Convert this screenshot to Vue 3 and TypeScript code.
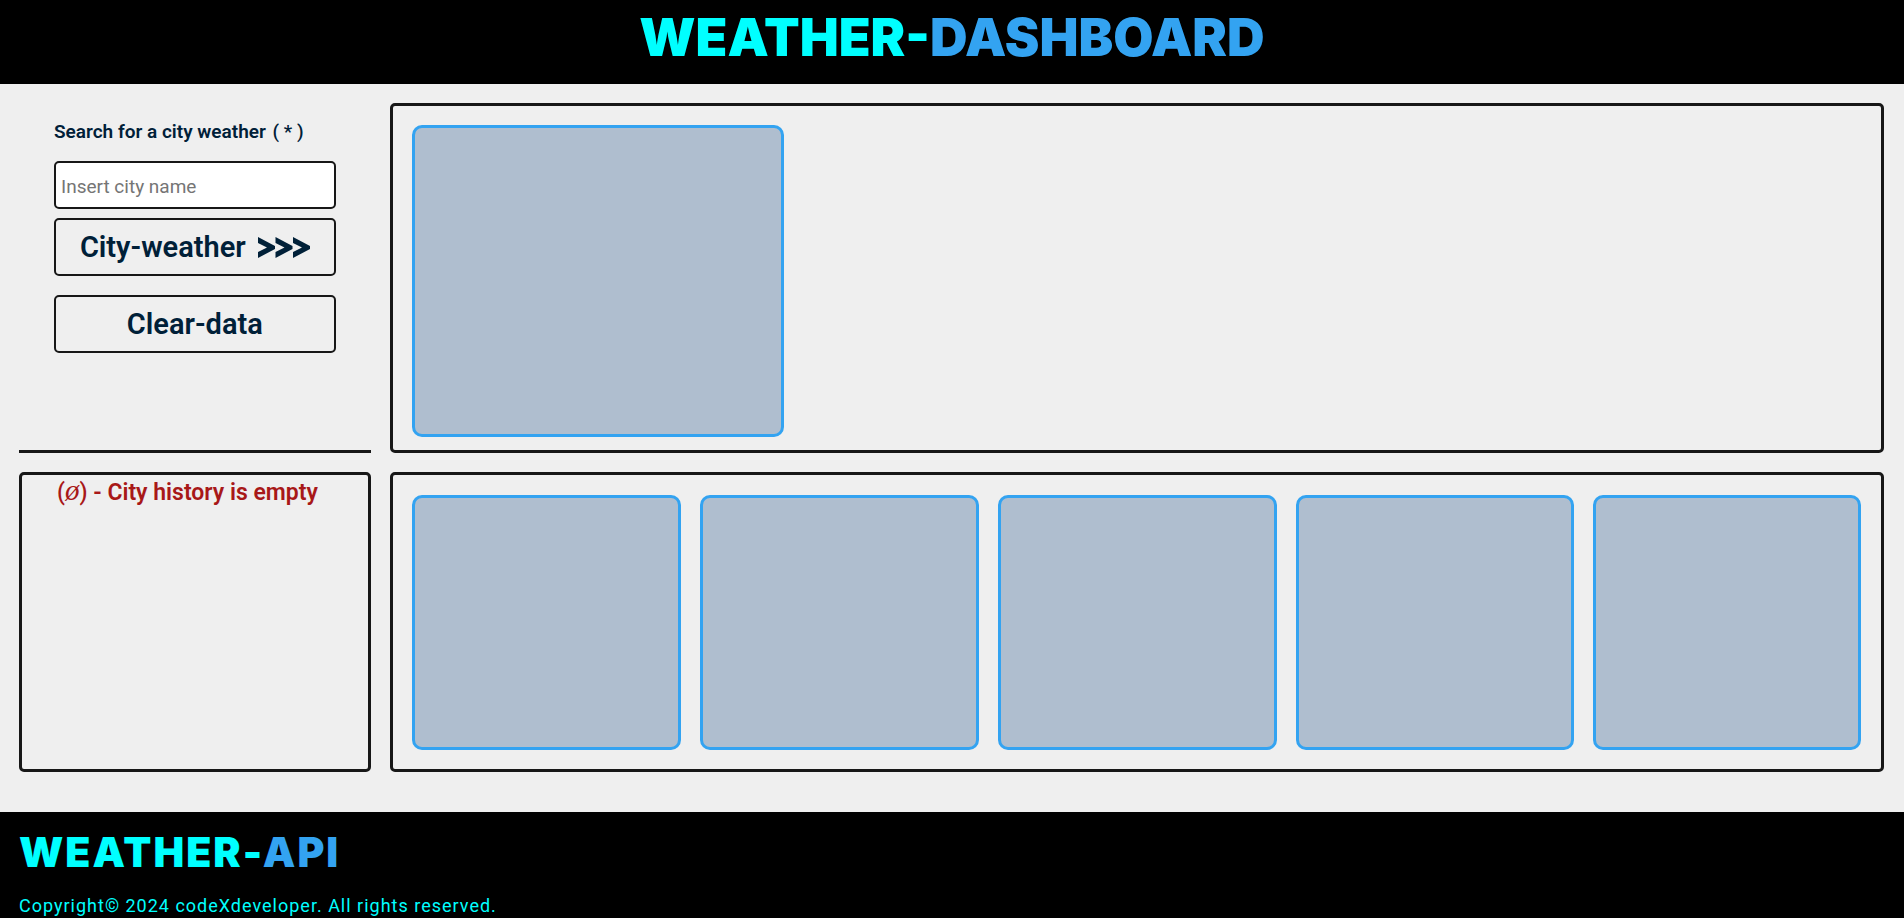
<script setup lang="ts">
import { ref } from 'vue'

const city = ref('')
const history = ref<string[]>([])
const forecastDays = [1, 2, 3, 4, 5]

function search(): void {
  const name = city.value.trim()
  if (name && !history.value.includes(name)) history.value.push(name)
  city.value = ''
}

function clearData(): void {
  history.value = []
  city.value = ''
}
</script>

<template>
  <div class="page">
    <header class="header">
      <h1 class="title">WEATHER-<span class="accent">DASHBOARD</span></h1>
    </header>

    <main class="board">
      <form class="search" @submit.prevent="search">
        <label class="label" for="city">Search for a city weather <span class="required">( * )</span></label>
        <input id="city" v-model="city" class="field" type="text" placeholder="Insert city name" />
        <button class="button" type="submit">
          City-weather
          <svg class="arrows" viewBox="0 0 52 21" width="52" height="21" aria-hidden="true">
            <path d="M0 0 17 9V12L0 21V15L9 10.500 0 6Z" />
            <path d="M17.500 0 34.500 9V12L17.500 21V15L26.500 10.500 17.500 6Z" />
            <path d="M35 0 52 9V12L35 21V15L44 10.500 35 6Z" />
          </svg>
        </button>
        <button class="button clear" type="button" @click="clearData">Clear-data</button>
      </form>

      <section class="panel" aria-label="Current weather">
        <article class="card current"></article>
      </section>

      <section class="panel history" aria-label="City history">
        <p v-if="!history.length" class="empty"><span class="sign">(<i class="null">ø</i>)</span> - City history is empty</p>
        <p v-for="name in history" :key="name" class="empty">{{ name }}</p>
      </section>

      <section class="panel forecast" aria-label="Five day forecast">
        <article v-for="day in forecastDays" :key="day" class="card day"></article>
      </section>
    </main>

    <footer class="footer">
      <h2 class="brand">WEATHER-<span class="accent">API</span></h2>
      <p class="copyright">Copyright© 2024 codeXdeveloper. All rights reserved.</p>
    </footer>
  </div>
</template>

<style>
body {
  margin: 0;
  background: #efefef;
}
</style>

<style scoped>
.page {
  font-family: Roboto, "Noto Sans", sans-serif;
  color: #002038;
  background: #efefef;
}

.page * {
  box-sizing: border-box;
}

.header,
.footer {
  background: #000;
  color: #00ffff;
}

.header {
  height: 84px;
  padding-top: 8px;
  text-align: center;
}

.title,
.brand {
  margin: 0;
  font-family: Inter, Roboto, sans-serif;
  font-weight: 900;
}

.title {
  font-size: 52px;
  line-height: 60px;
}

.accent {
  color: #33a3f1;
}

.board {
  display: grid;
  grid-template-columns: minmax(0, 4fr) minmax(0, 17fr);
  grid-template-rows: 350px 300px;
  gap: 19px;
  padding: 19px 20px 40px 19px;
}

.search {
  display: flex;
  flex-direction: column;
  padding: 19px 35px 0;
  border-bottom: 3px solid #171717;
}

.label {
  margin-bottom: 19px;
  font-size: 19px;
  line-height: 20px;
  font-weight: 600;
}

.required {
  margin-left: 2px;
  font-weight: 500;
}

.field {
  width: 100%;
  height: 48px;
  padding: 2px 5px 0;
  border: 2px solid #171717;
  border-radius: 5px;
  background: #fff;
  color: inherit;
  font-family: inherit;
  font-size: 19px;
}

.field::placeholder {
  color: #757575;
}

.button {
  display: flex;
  align-items: center;
  justify-content: center;
  gap: 12px;
  height: 58px;
  margin-top: 9px;
  padding: 0;
  border: 2px solid #171717;
  border-radius: 5px;
  background: transparent;
  color: inherit;
  font-family: inherit;
  font-size: 29px;
  font-weight: 600;
  line-height: 34px;
  white-space: nowrap;
  cursor: pointer;
}

.clear {
  margin-top: 19px;
}

.arrows {
  fill: currentColor;
}

.panel {
  min-width: 0;
  border: 3px solid #171717;
  border-radius: 5px;
}

.card {
  border: 3px solid #33a3f1;
  border-radius: 10px;
  background: #afbecf;
}

.current {
  width: 25%;
  height: 312px;
  margin: 19px;
}

.empty {
  margin: 1px 0 0 35px;
  color: #a81818;
  font-size: 23px;
  line-height: 30px;
  font-weight: 600;
}

.sign {
  font-weight: 500;
}

.null {
  font-family: "Liberation Serif", serif;
  font-weight: 400;
  font-size: 29px;
  line-height: 1;
}

.forecast {
  display: grid;
  grid-template-columns: repeat(5, minmax(0, 1fr));
}

.day {
  margin: 20px 9px 19px 10px;
}

.day:first-child {
  margin-left: 19px;
}

.day:last-child {
  margin-right: 20px;
}

.footer {
  padding: 16px 20px 0 19px;
}

.brand {
  font-size: 41px;
  line-height: 48px;
  letter-spacing: 2px;
}

.copyright {
  margin: 18px 0 0;
  font-size: 18px;
  line-height: 24px;
  letter-spacing: 1px;
}
</style>
